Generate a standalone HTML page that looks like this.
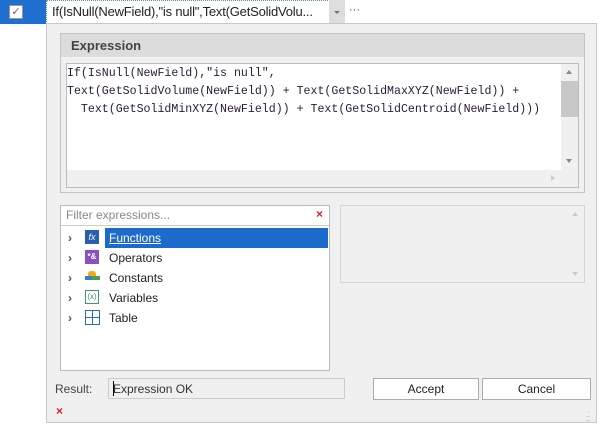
<!DOCTYPE html>
<html><head><style>
*{box-sizing:border-box;margin:0;padding:0}
body{width:603px;height:429px;background:#fff;font-family:"Liberation Sans",sans-serif;font-size:12px;color:#222;position:relative;overflow:hidden}
.a{position:absolute}
.code{font-family:"Liberation Mono",monospace;font-size:11.6px;color:#2a1a3a;line-height:18px;white-space:pre}
.tri{position:absolute;width:0;height:0;border-left:3.5px solid transparent;border-right:3.5px solid transparent}
.item{position:absolute;left:0;height:20px;line-height:20px;font-size:12px;color:#222}
.chev{position:absolute;left:7px;top:0;color:#555;font-size:12px;font-weight:bold}
.btn{position:absolute;background:#fff;border:1px solid #acacac;text-align:center;line-height:20px;font-size:12px}
</style></head><body>
<div class="a" style="left:0;top:0;width:46px;height:24px;background:#1f6fd0"></div>
<div class="a" style="left:9px;top:5px;width:14px;height:14px;background:#fff;border:1px solid #999;font-size:11px;line-height:12px;text-align:center;color:#666">✓</div>
<div class="a" style="left:46px;top:0;width:290px;height:24px;border:1px dotted #5a8ad0;border-right:none;background:#fff"></div>
<div class="a" style="left:52px;top:4px;font-size:13px;letter-spacing:-0.2px">If(IsNull(NewField),"is null",Text(GetSolidVolu...</div>
<div class="a" style="left:329px;top:0;width:16px;height:23px;background:#ddd"></div>
<div class="tri" style="left:334px;top:11px;border-top:3px solid #777"></div>
<div class="a" style="left:349px;top:4px;font-size:11px;color:#444">···</div>
<div class="a" style="left:46px;top:23px;width:551px;height:400px;background:#f0f0f0;border:1px solid #c8c8c8"></div>
<div class="a" style="left:60px;top:33px;width:525px;height:160px;border:1px solid #c4c4c4;background:#f0f0f0"></div>
<div class="a" style="left:61px;top:34px;width:523px;height:23px;background:#dcdcdc"></div>
<div class="a" style="left:71px;top:38px;font-weight:bold;font-size:13px;color:#444">Expression</div>
<div class="a" style="left:66px;top:63px;width:513px;height:125px;border:1px solid #bcbcbc;background:#fff"></div>
<div class="a code" style="left:67px;top:65px">If(IsNull(NewField),"is null",
Text(GetSolidVolume(NewField)) + Text(GetSolidMaxXYZ(NewField)) +
  Text(GetSolidMinXYZ(NewField)) + Text(GetSolidCentroid(NewField)))</div>
<div class="a" style="left:561px;top:64px;width:17px;height:106px;background:#f0f0f0"></div>
<div class="a" style="left:561px;top:81px;width:17px;height:36px;background:#c8c8c8"></div>
<div class="tri" style="left:566px;top:70px;border-bottom:4px solid #888"></div>
<div class="tri" style="left:566px;top:159px;border-top:4px solid #888"></div>
<div class="a" style="left:67px;top:170px;width:511px;height:17px;background:#f0f0f0"></div>
<div class="a" style="left:551px;top:175px;width:0;height:0;border-top:3.5px solid transparent;border-bottom:3.5px solid transparent;border-left:4px solid #ccc"></div>
<div class="a" style="left:60px;top:205px;width:270px;height:166px;border:1px solid #bcbcbc;background:#fff"></div>
<div class="a" style="left:61px;top:206px;width:268px;height:20px;border-bottom:1px solid #ccc"></div>
<div class="a" style="left:66px;top:208px;color:#888;font-size:12px">Filter expressions...</div>
<div class="a" style="left:316px;top:207px;color:#e02020;font-size:12px;font-weight:bold">×</div>
<div class="a" style="left:61px;top:228px;width:268px;height:100px">
<div class="a" style="left:44px;top:0;width:223px;height:20px;background:#1c6bcc"></div>
<div class="item" style="top:0"><span class="chev">›</span></div>
<div class="a" style="left:24px;top:2px;width:14px;height:14px;background:#2a5fb0;color:#fff;font-size:9px;font-style:italic;text-align:center;line-height:14px">fx</div>
<div class="item" style="left:48px;top:0;color:#fff;text-decoration:underline">Functions</div>
<div class="item" style="top:20px"><span class="chev">›</span></div>
<div class="a" style="left:24px;top:22px;width:14px;height:14px;background:#8a4fc0;color:#fff;font-size:8px;font-weight:bold;text-align:center;line-height:14px">*&amp;</div>
<div class="item" style="left:48px;top:20px">Operators</div>
<div class="item" style="top:40px"><span class="chev">›</span></div>
<div class="a" style="left:27px;top:43px;width:8px;height:5px;background:#f4a820;border-radius:3px 3px 0 0"></div>
<div class="a" style="left:24px;top:48px;width:7px;height:4px;background:#3a7ad0"></div>
<div class="a" style="left:31px;top:48px;width:8px;height:4px;background:#4aa050"></div>
<div class="item" style="left:48px;top:40px">Constants</div>
<div class="item" style="top:60px"><span class="chev">›</span></div>
<div class="a" style="left:24px;top:62px;width:14px;height:14px;border:1px solid #3a9a6a;color:#3a9a6a;font-size:8px;text-align:center;line-height:12px">(x)</div>
<div class="item" style="left:48px;top:60px">Variables</div>
<div class="item" style="top:80px"><span class="chev">›</span></div>
<div class="a" style="left:24px;top:82px;width:15px;height:15px;border:1px solid #2a6ac8;background:linear-gradient(#2a6ac8,#2a6ac8) 6px 0/1px 100% no-repeat,linear-gradient(#2a6ac8,#2a6ac8) 0 6px/100% 1px no-repeat"></div>
<div class="item" style="left:48px;top:80px">Table</div>
</div>
<div class="a" style="left:340px;top:205px;width:245px;height:78px;border:1px solid #d4d4d4;background:#f0f0f0"></div>
<div class="tri" style="left:572px;top:212px;border-bottom:4px solid #ccc"></div>
<div class="tri" style="left:572px;top:272px;border-top:4px solid #ccc"></div>
<div class="a" style="left:55px;top:382px;color:#444">Result:</div>
<div class="a" style="left:108px;top:378px;width:237px;height:21px;border:1px solid #ccc;background:#f0f0f0"></div>
<div class="a" style="left:113px;top:382px;color:#333">Expression OK</div>
<div class="a" style="left:113px;top:381px;width:1px;height:15px;background:#000"></div>
<div class="btn" style="left:373px;top:378px;width:106px;height:22px">Accept</div>
<div class="btn" style="left:482px;top:378px;width:109px;height:22px">Cancel</div>
<div class="a" style="left:56px;top:404px;color:#e02020;font-size:12px;font-weight:bold">×</div>
<div class="a" style="left:585px;top:411px;font-size:8px;color:#aaa;letter-spacing:-1px;line-height:4px">&nbsp;&nbsp;·<br>&nbsp;··<br>···</div>
</body></html>
